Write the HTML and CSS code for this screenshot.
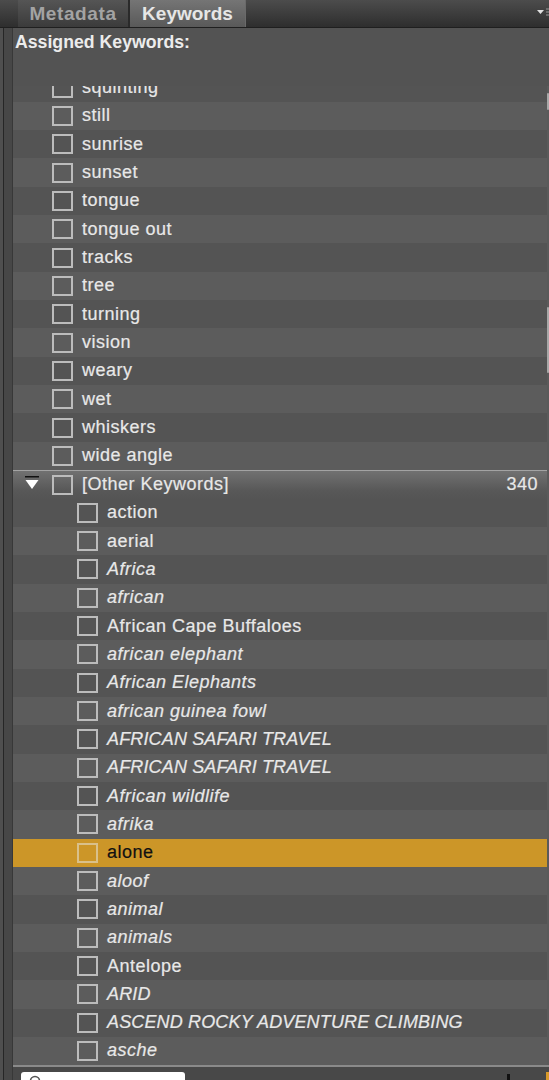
FILE: index.html
```html
<!DOCTYPE html>
<html>
<head>
<meta charset="utf-8">
<link rel="stylesheet" href="styles.css">
</head>
<body>
<div class="app">
  <div class="tabbar">
    <div class="tab tab-inactive">Metadata</div>
    <div class="tab tab-active">Keywords</div>
    <div class="tabbar-fill"></div>
    <div class="panel-menu">
      <svg width="12" height="10" viewBox="0 0 12 10"><path d="M0 2 L7 2 L3.5 6 Z" fill="#e0e0e0"/><path d="M9 1 H12 M9 4 H12 M9 7 H12" stroke="#9a9a9a" stroke-width="1"/></svg>
    </div>
  </div>
  <div class="main">
    <div class="gutter"></div>
    <div class="panel">
      <div class="assigned">Assigned Keywords:</div>
      <div class="viewport">
        <div class="list">
          <div class="rows top-rows">
            <div class="row l1"><span class="cb"></span><span class="label">squinting</span></div>
            <div class="row l1"><span class="cb"></span><span class="label">still</span></div>
            <div class="row l1"><span class="cb"></span><span class="label">sunrise</span></div>
            <div class="row l1"><span class="cb"></span><span class="label">sunset</span></div>
            <div class="row l1"><span class="cb"></span><span class="label">tongue</span></div>
            <div class="row l1"><span class="cb"></span><span class="label">tongue out</span></div>
            <div class="row l1"><span class="cb"></span><span class="label">tracks</span></div>
            <div class="row l1"><span class="cb"></span><span class="label">tree</span></div>
            <div class="row l1"><span class="cb"></span><span class="label">turning</span></div>
            <div class="row l1"><span class="cb"></span><span class="label">vision</span></div>
            <div class="row l1"><span class="cb"></span><span class="label">weary</span></div>
            <div class="row l1"><span class="cb"></span><span class="label">wet</span></div>
            <div class="row l1"><span class="cb"></span><span class="label">whiskers</span></div>
            <div class="row l1"><span class="cb"></span><span class="label">wide angle</span></div>
          </div>
          <div class="group-header">
            <span class="disclosure"><svg width="14" height="14" viewBox="0 0 14 14"><rect x="0" y="0" width="14" height="1.5" fill="#111"/><path d="M0.5 4 L13.5 4 L7 13 Z" fill="#ffffff"/></svg></span>
            <span class="cb"></span>
            <span class="label">[Other Keywords]</span>
            <span class="count">340</span>
          </div>
          <div class="rows sub-rows">
            <div class="row l2"><span class="cb"></span><span class="label">action</span></div>
            <div class="row l2"><span class="cb"></span><span class="label">aerial</span></div>
            <div class="row l2"><span class="cb"></span><span class="label it">Africa</span></div>
            <div class="row l2"><span class="cb"></span><span class="label it">african</span></div>
            <div class="row l2"><span class="cb"></span><span class="label">African Cape Buffaloes</span></div>
            <div class="row l2"><span class="cb"></span><span class="label it">african elephant</span></div>
            <div class="row l2"><span class="cb"></span><span class="label it">African Elephants</span></div>
            <div class="row l2"><span class="cb"></span><span class="label it">african guinea fowl</span></div>
            <div class="row l2"><span class="cb"></span><span class="label it caps">AFRICAN SAFARI TRAVEL</span></div>
            <div class="row l2"><span class="cb"></span><span class="label it caps">AFRICAN SAFARI TRAVEL</span></div>
            <div class="row l2"><span class="cb"></span><span class="label it">African wildlife</span></div>
            <div class="row l2"><span class="cb"></span><span class="label it">afrika</span></div>
            <div class="row l2 selected"><span class="cb"></span><span class="label">alone</span></div>
            <div class="row l2"><span class="cb"></span><span class="label it">aloof</span></div>
            <div class="row l2"><span class="cb"></span><span class="label it">animal</span></div>
            <div class="row l2"><span class="cb"></span><span class="label it">animals</span></div>
            <div class="row l2"><span class="cb"></span><span class="label">Antelope</span></div>
            <div class="row l2"><span class="cb"></span><span class="label it caps">ARID</span></div>
            <div class="row l2"><span class="cb"></span><span class="label it caps">ASCEND ROCKY ADVENTURE CLIMBING</span></div>
            <div class="row l2"><span class="cb"></span><span class="label it">asche</span></div>
          </div>
        </div>
        <div class="track">
          <span class="thumb thumb-a"></span>
          <span class="thumb thumb-b"></span>
        </div>
      </div>
      <div class="bottombar">
        <div class="search">
          <svg width="14" height="14" viewBox="0 0 14 14"><circle cx="6" cy="6" r="4.5" fill="none" stroke="#555" stroke-width="1.6"/></svg>
        </div>
        <span class="tool-glyph"></span>
        <span class="tool-orange"></span>
      </div>
    </div>
  </div>
</div>
</body>
</html>
```
FILE: styles.css
```css
* { box-sizing: border-box; }
html, body {
  margin: 0;
  padding: 0;
  width: 549px;
  height: 1080px;
  overflow: hidden;
  background: #535353;
  font-family: "Liberation Sans", Arial, sans-serif;
}
.app {
  display: flex;
  flex-direction: column;
  height: 1080px;
}
.tabbar {
  height: 28px;
  flex: none;
  display: flex;
  align-items: flex-end;
  padding-left: 18px;
  background: linear-gradient(#4c4c4c, #2e2e2e);
  border-bottom: 1px solid #1f1f1f;
  position: relative;
}
.tab {
  height: 27px;
  display: flex;
  align-items: center;
  justify-content: center;
  font-weight: bold;
  font-size: 19px;
  border-right: 2px solid #2a2a2a;
}
.tab-inactive {
  width: 112px;
  color: #a3a3a3;
  letter-spacing: 0.6px;
  background: linear-gradient(#555555, #3b3b3b);
}
.tab-active {
  width: 116px;
  color: #e6e6e6;
  background: linear-gradient(#757575, #595959);
  border-right: 1px solid #6a6a6a;
}
.tabbar-fill { flex: 1; }
.panel-menu {
  position: absolute;
  right: 0;
  top: 8px;
  width: 12px;
  height: 10px;
  display: flex;
}
.main {
  flex: 1;
  display: flex;
  min-height: 0;
}
.gutter {
  width: 13px;
  flex: none;
  background: #474747;
  border-left: 3px solid #4f4f4f;
  border-right: 1px solid #383838;
  box-shadow: inset 1px 0 0 #262626;
}
.panel {
  flex: 1;
  display: flex;
  flex-direction: column;
  min-width: 0;
}
.assigned {
  height: 58px;
  flex: none;
  padding: 4px 0 0 2px;
  color: #ececec;
  font-weight: bold;
  font-size: 17.7px;
}
.viewport {
  flex: 1;
  display: flex;
  min-height: 0;
  overflow: hidden;
  position: relative;
}
.list {
  flex: 1;
  min-width: 0;
  margin-top: -12.5px;
}
.row {
  height: 28.33px;
  display: flex;
  align-items: center;
  background: #545454;
  color: #e8e8e8;
  font-size: 18px;
  letter-spacing: 0.5px;
  -webkit-text-stroke: 0.2px currentColor;
}
.rows .row:nth-child(even) { background: #5c5c5c; }
.row.l1 { padding-left: 39px; }
.row.l2 { padding-left: 64px; }
.cb {
  width: 21px;
  height: 20px;
  flex: none;
  border: 2px solid #bcbcbc;
  margin-right: 9px;
  -webkit-text-stroke: 0;
}
.label { white-space: nowrap; }
.label.it { font-style: italic; }
.label.caps { letter-spacing: 0.15px; }
.row.selected {
  background: #cc9628 !important;
  color: #111111;
}
.row.selected .cb { border-color: #d9c08a; }
.group-header {
  height: 28.5px;
  display: flex;
  align-items: center;
  padding-left: 12px;
  padding-right: 9px;
  border-top: 1.5px solid #a3a3a3;
  background: linear-gradient(#717171, #585858 70%, #545454);
  color: #e8e8e8;
  font-size: 18px;
  letter-spacing: 0.5px;
  -webkit-text-stroke: 0.2px currentColor;
}
.disclosure {
  width: 14px;
  height: 14px;
  margin-right: 13px;
  display: flex;
  margin-top: -3px;
}
.count { margin-left: auto; }
.track {
  width: 2px;
  flex: none;
  background: #5a5a5a;
  position: relative;
}
.thumb {
  position: absolute;
  left: 0;
  width: 2px;
  background: #a8a8a8;
  border-radius: 1px;
}
.thumb-a { top: 7px; height: 17px; }
.thumb-b { top: 221px; height: 66px; }
.bottombar {
  height: 15px;
  flex: none;
  border-top: 2px solid #8a8a8a;
  background: #484848;
  display: flex;
  align-items: flex-end;
  padding-left: 8px;
  position: relative;
}
.search {
  width: 164px;
  height: 8px;
  background: #ffffff;
  border-radius: 3px 3px 0 0;
  overflow: hidden;
  padding: 3px 0 0 8px;
}
.tool-glyph {
  position: absolute;
  left: 494px;
  bottom: 0;
  width: 3px;
  height: 6px;
  background: #111;
}
.tool-orange {
  position: absolute;
  right: 0;
  bottom: 0;
  width: 3px;
  height: 8px;
  background: #d99a2a;
}
```
